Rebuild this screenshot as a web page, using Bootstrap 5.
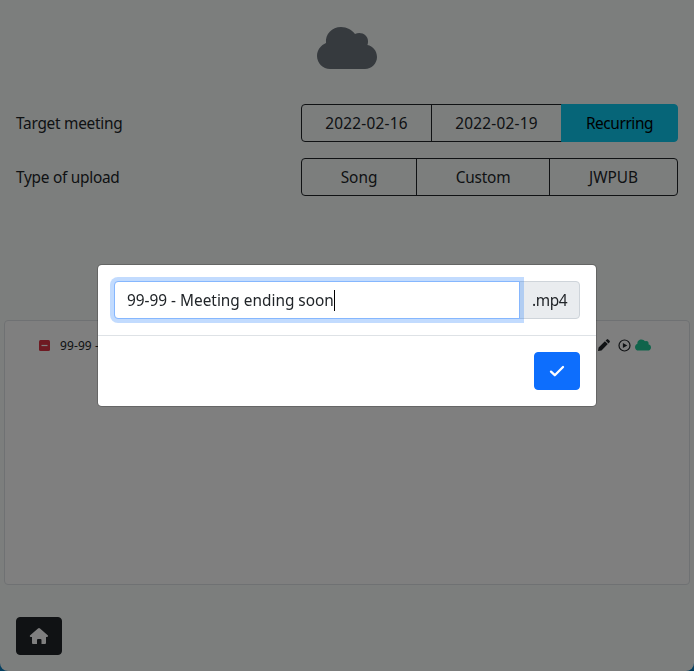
<!DOCTYPE html>
<html lang="en">
<head>
<meta charset="utf-8">
<meta name="viewport" content="width=device-width, initial-scale=1">
<title>Upload media</title>
<link href="https://cdn.jsdelivr.net/npm/bootstrap@5.3.0/dist/css/bootstrap.min.css" rel="stylesheet">
<style>
  html { background: #0a7fc0; }
  body { font-family: "Segoe UI", "Noto Sans", sans-serif; height: 671px; overflow: hidden; background: transparent; }
  .app-window { height: 671px; background: #f9fdfb; border-radius: 0 0 8px 8px; }
  .ui-text { display: inline-block; white-space: nowrap; font-size: 15.4px; letter-spacing: -.26px; line-height: 24px; padding-top: 2px; }
  .btn, .input-group-text, .form-control { --bs-btn-border-radius: .25rem; border-radius: .25rem; letter-spacing: -.2px; font-size: 15.4px; line-height: 24px; height: 38px; }
  .btn-group .btn { padding: 7px 0 5px; }
  .picker { width: 377px; }
  .w-date { flex: 0 0 131px !important; letter-spacing: .2px; }
  .w-recurring { letter-spacing: -.4px; }
  .w-song { flex: 0 0 116px !important; letter-spacing: 0; }
  .w-custom { flex: 0 0 134px !important; }
  .w-jwpub { letter-spacing: 0; }
  .cloud-head { height: 104px; padding-top: 24px; }
  .media-list { height: 265px; margin: 124px 4px 0; border-radius: .25rem; }
  .media-row { padding: 15px 38px 0 34px; height: 33px; font-size: 12px; }
  .media-name { margin-left: 10px; padding-top: 1px; letter-spacing: .1px; }
  .media-row svg, .cloud-head svg, .btn svg { display: block; }
  .home-bar { padding: 32px 16px 0; }
  .modal-backdrop { --bs-backdrop-opacity: .5; }
  .modal-content { border-radius: .3rem; border-color: rgba(0,0,0,.2); }
  .modal-footer { min-height: 71px; }
  .name-field { border-color: #86b7fe; box-shadow: 0 0 0 4px rgba(13,110,253,.25); z-index: 5; position: relative; display: flex; align-items: center; letter-spacing: -.01px; }
  .file-name { padding-top: 2px; }
  .text-caret { width: 1px; height: 21px; background: #000; }
  .suffix { width: 61px; padding: 8px 0 6px 12px; background: #e9ecef; border-color: #ced4da; letter-spacing: -.4px; }
</style>
</head>
<body>
<main class="app-window d-flex flex-column">
  <header class="cloud-head d-flex justify-content-center">
    <svg width="60" height="48" viewBox="0 0 60 48" fill="#6c757d"><path d="M13 45C6 45 0 39 0 32C0 26 4 21 9 19C8 10 15 3 24 3C30 3 35 6 38 10C44 7 51 11 51 17C51 18 51 20 50.400 21C56 22 60 27 60 33C60 39.500 54.500 45 48 45Z"/></svg>
  </header>
  <div class="d-flex justify-content-between align-items-center px-3 mb-3">
    <span class="ui-text">Target meeting</span>
    <div class="btn-group picker">
      <button class="btn btn-outline-dark w-date">2022-02-16</button>
      <button class="btn btn-outline-dark w-date">2022-02-19</button>
      <button class="btn btn-info w-recurring">Recurring</button>
    </div>
  </div>
  <div class="d-flex justify-content-between align-items-center px-3">
    <span class="ui-text">Type of upload</span>
    <div class="btn-group picker">
      <button class="btn btn-outline-dark w-song">Song</button>
      <button class="btn btn-outline-dark w-custom">Custom</button>
      <button class="btn btn-outline-dark w-jwpub">JWPUB</button>
    </div>
  </div>
  <section class="media-list border bg-white">
    <div class="media-row d-flex align-items-center">
      <svg width="11" height="11" viewBox="0 0 11 11"><rect width="11" height="11" rx="1.500" fill="#dc3545"/><path d="M2.500 5.500h6" stroke="#fff" stroke-width="1.200"/></svg>
      <span class="media-name text-nowrap overflow-hidden flex-grow-1">99-99 - Meeting ending soon.mp4</span>
      <div class="d-flex align-items-center">
        <svg width="12" height="12" viewBox="0 0 12 12" fill="#212529"><path d="M0 12L.6 8.500L6.900 2.200L9.800 5.100L3.500 11.400ZM7.600 1.500L8.800 .4Q9.500 -.2 10.200 .4L11.600 1.800Q12.200 2.500 11.600 3.200L10.500 4.400Z"/></svg>
        <svg class="ms-2" width="13" height="13" viewBox="0 0 13 13"><circle cx="6.500" cy="6.500" r="5.500" fill="none" stroke="#212529" stroke-width="1.200"/><path d="M4.900 3.900L9.300 6.500L4.900 9.100Z" fill="#212529"/></svg>
        <svg class="ms-1" width="16" height="12" viewBox="0 2 60 44" fill="#20c997"><path d="M13 45C6 45 0 39 0 32C0 26 4 21 9 19C8 10 15 3 24 3C30 3 35 6 38 10C44 7 51 11 51 17C51 18 51 20 50.400 21C56 22 60 27 60 33C60 39.500 54.500 45 48 45Z"/></svg>
      </div>
    </div>
  </section>
  <footer class="home-bar">
    <button class="btn btn-dark" aria-label="Home">
      <svg width="20" height="18" viewBox="0 0 20 18" fill="#fff"><path d="M10 1Q10.600 1 11 1.400L18.700 8.200Q19.200 8.700 19 9.300Q18.700 10 18 10H17V16Q17 17 16 17H12.500V13Q12.500 12 11.500 12H9Q8 12 8 13V17H4Q3 17 3 16V10H1.700Q1 10 .8 9.300Q.7 8.700 1.200 8.200L9 1.400Q9.500 1 10 1Z"/></svg>
    </button>
  </footer>
</main>
<div class="modal-backdrop show"></div>
<div class="modal d-block" tabindex="-1" role="dialog">
  <div class="modal-dialog modal-dialog-centered my-0 min-vh-100">
    <div class="modal-content">
      <div class="modal-body p-3">
        <div class="input-group">
          <div class="form-control name-field" role="textbox"><span class="file-name">99-99 - Meeting ending soon</span><span class="text-caret"></span></div>
          <span class="input-group-text suffix">.mp4</span>
        </div>
      </div>
      <div class="modal-footer">
        <button class="btn btn-primary" aria-label="Confirm">
          <svg width="20" height="16" viewBox="0 0 20 16"><path d="M4 8.600L7.800 12.200L16 4" fill="none" stroke="#fff" stroke-width="2.300" stroke-linecap="round" stroke-linejoin="round"/></svg>
        </button>
      </div>
    </div>
  </div>
</div>
<script src="https://cdn.jsdelivr.net/npm/bootstrap@5.3.0/dist/js/bootstrap.bundle.min.js"></script>
</body>
</html>
